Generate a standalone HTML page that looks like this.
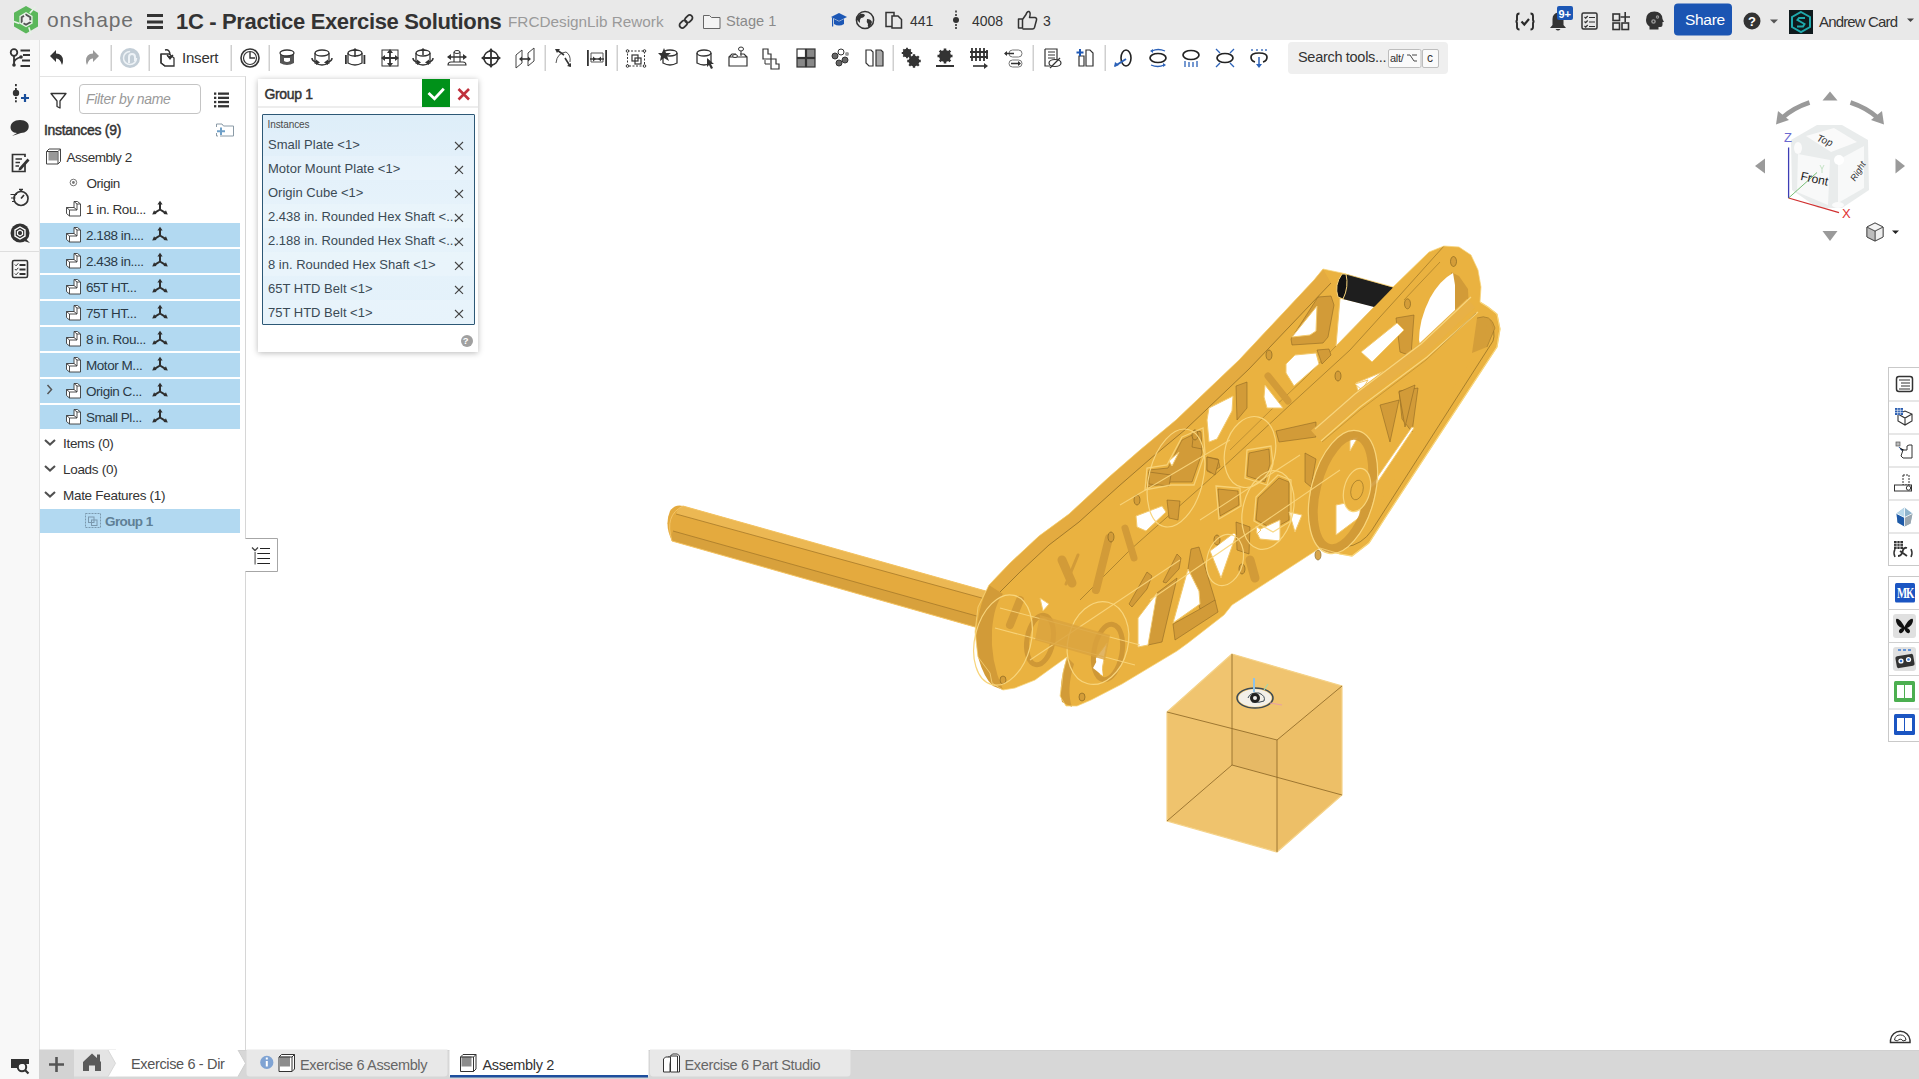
<!DOCTYPE html>
<html><head><meta charset="utf-8">
<style>
*{box-sizing:border-box;margin:0;padding:0}
html,body{width:1919px;height:1079px;overflow:hidden;background:#fff;font-family:"Liberation Sans",sans-serif;color:#333}
.t{position:absolute;white-space:nowrap;line-height:1}
svg{position:absolute;overflow:visible}
</style></head><body>

<div style="position:absolute;left:0;top:0;width:1919px;height:40px;background:#e9e9e9"></div>
<div style="position:absolute;left:0;top:40px;width:39px;height:1039px;background:#f8f8f8"></div>
<div style="position:absolute;left:39px;top:40px;width:1px;height:1039px;background:#e3e3e3"></div>
<div style="position:absolute;left:40px;top:76px;width:206px;height:974px;background:#fff;border-top:1px solid #e3e3e3;border-right:1px solid #d6d6d6"></div>
<div style="position:absolute;left:40px;top:1050px;width:1879px;height:29px;background:#d7d7d7;border-top:1.5px solid #d0d0d0"></div>
<svg style="left:0;top:0" width="1919" height="40">
 <g transform="translate(26,19.7)">
  <polygon points="0,-13.8 12,-6.9 12,6.9 0,13.8 -12,6.9 -12,-6.9" fill="#5bb75b"/>
  <polygon points="0,-7.6 6.6,-3.8 6.6,3.8 0,7.6 -6.6,3.8 -6.6,-3.8" fill="#e6f3e6"/>
  <path d="M3.8,-6.6 L 9.5,-13 M-6.6,3.8 L-13,1.5 M2.8,7.6 L 5,14" stroke="#e6f3e6" stroke-width="1.6"/>
  <polygon points="0,-5 4.3,-2.5 4.3,2.5 0,5 -4.3,2.5 -4.3,-2.5" fill="#eeeeee" stroke="#555" stroke-width="1.9" stroke-dasharray="8 1.8"/>
 </g>
 <rect x="147" y="14" width="16" height="3" fill="#333"/>
 <rect x="147" y="20.5" width="16" height="3" fill="#333"/>
 <rect x="147" y="26" width="16" height="3" fill="#333"/>
 <g stroke="#333" stroke-width="1.8" fill="none" transform="translate(686,21.5) rotate(-45)">
  <rect x="-8" y="-2.8" width="8.5" height="5.6" rx="2.8"/>
  <rect x="-0.5" y="-2.8" width="8.5" height="5.6" rx="2.8"/>
 </g>
 <path d="M703.5,15.5 h6 l2,2 h8.5 v11 h-16.5 z" fill="#f4f4f4" stroke="#666" stroke-width="1"/>
 <g fill="#1c57b5">
  <polygon points="831,17 839,13 847,17 839,21"/>
  <path d="M834,19 v5 q5,3 10,0 v-5 l-5,2.5 z"/>
  <rect x="832" y="17.5" width="1.2" height="9"/>
 </g>
 <g transform="translate(865,20)">
  <circle r="8.6" fill="none" stroke="#333" stroke-width="1.5"/>
  <path d="M-5,-6 q3,-1 5,1 q-1,3 -4,3 q-2,2 -1,5 l-3,-3 q-1,-3 3,-6z M2,-1 q4,0 5,3 q-1,4 -3,6 q-2,-2 -1,-4 q-2,-2 -1,-5z" fill="#333"/>
 </g>
 <g fill="none" stroke="#333" stroke-width="1.5">
  <rect x="886" y="12.5" width="8" height="14"/>
  <path d="M892,16 h6 l3.5,3.5 v8.5 h-9.5 z" fill="#e9e9e9"/>
 </g>
 <g fill="#333"><circle cx="956" cy="20" r="3"/><rect x="955.2" y="10.5" width="1.6" height="2"/><rect x="955.2" y="14" width="1.6" height="2"/><rect x="955.2" y="24" width="1.6" height="2"/><rect x="955.2" y="27" width="1.6" height="2"/></g>
 <path d="M1018.5,19 h4 v9 h-4 z M1022.5,19.5 l3.5,-5 q1,-3.5 3,-3 q2,1 0.5,6 h5.5 q2,0.5 1.5,2.5 l-2,7.5 q-0.5,1.5 -2,1.5 h-10" fill="none" stroke="#333" stroke-width="1.5" stroke-linejoin="round"/>
 <path d="M1519.5,13.5 Q1517,13.5 1517,16 V19.5 Q1517,21.5 1515.5,21.5 Q1517,21.5 1517,23.5 V27 Q1517,29.5 1519.5,29.5 M1530.5,13.5 Q1533,13.5 1533,16 V19.5 Q1533,21.5 1534.5,21.5 Q1533,21.5 1533,23.5 V27 Q1533,29.5 1530.5,29.5" fill="none" stroke="#2a2a2a" stroke-width="1.9"/>
 <path d="M1521.5,21.5 l2.8,3 l4.7,-5.5" fill="none" stroke="#2a2a2a" stroke-width="2.2"/>
 <path d="M1550,28 h16 l-2.5,-3 v-6 q0,-5.5 -5.5,-6.5 q-5.5,1 -5.5,6.5 v6 z M1555.5,29 q2.5,3 5,0 z" fill="#333"/>
 <rect x="1557" y="6" width="16" height="14" rx="2" fill="#1c57b5"/>
 <text x="1558.5" y="17.5" font-family="Liberation Sans" font-size="11" font-weight="bold" fill="#fff">9+</text>
 <rect x="1582" y="13" width="15" height="16" rx="1.5" fill="none" stroke="#333" stroke-width="1.5"/>
 <path d="M1584.5,17 l1.2,1.2 l2,-2.2 M1584.5,21.5 l1.2,1.2 l2,-2.2 M1584.5,26 l1.2,1.2 l2,-2.2 M1589,17.5 h6 M1589,22 h6 M1589,26.5 h6" fill="none" stroke="#333" stroke-width="1.2"/>
 <g fill="none" stroke="#333" stroke-width="1.6">
  <rect x="1613" y="14" width="6.5" height="6.5"/><rect x="1613" y="23" width="6.5" height="6.5"/><rect x="1622" y="23" width="6.5" height="6.5"/>
  <path d="M1625.2,12 v10 M1620.5,17 h9.5"/>
 </g>
 <path d="M1646,20 q0,-8.5 8.5,-8.5 q7.5,0 8,7.5 l1.5,3 h-1.5 v3 q0,2 -2,2 h-2 v2.5 h-9 v-3 q-3.5,-2.5 -3.5,-6.5z" fill="#333"/>
 <g fill="#9a9a9a"><circle cx="1653.5" cy="21.5" r="2.3"/><circle cx="1657.5" cy="17" r="1.7"/></g><circle cx="1653.5" cy="21.5" r="0.9" fill="#333"/><circle cx="1657.5" cy="17" r="0.6" fill="#333"/>
 <rect x="1674" y="3.5" width="58" height="32" rx="4" fill="#1b55b3"/>
 <circle cx="1752" cy="21" r="8.5" fill="#333"/>
 <text x="1748" y="26" font-family="Liberation Sans" font-size="13" font-weight="bold" fill="#fff">?</text>
 <polygon points="1770,19.5 1778,19.5 1774,23.5" fill="#555"/>
 <rect x="1789" y="10" width="24" height="24" fill="#0f1a1d"/>
 <polygon points="1801,12 1810,17 1810,27 1801,32 1792,27 1792,17" fill="none" stroke="#1fa9ad" stroke-width="2"/>
 <path d="M1805,18 h-6 l-1.5,2 l7,4 l-1.5,2.5 h-6" fill="none" stroke="#1fa9ad" stroke-width="2"/>
 <polygon points="1907,18.5 1914,18.5 1910.5,22" fill="#444"/>
</svg>
<div class="t" style="left:176px;top:11px;font-size:22px;color:#333;font-weight:bold;letter-spacing:-0.34px">1C - Practice Exercise Solutions</div>
<div class="t" style="left:47px;top:9px;font-size:21px;color:#6e6e6e;letter-spacing:0.9px">onshape</div>
<div class="t" style="left:508px;top:14px;font-size:15.3px;color:#9a9a9a;">FRCDesignLib Rework</div>
<div class="t" style="left:726px;top:14px;font-size:14.6px;color:#8a8a8a;">Stage 1</div>
<div class="t" style="left:910px;top:14px;font-size:14px;color:#333;">441</div>
<div class="t" style="left:972px;top:14px;font-size:14px;color:#333;">4008</div>
<div class="t" style="left:1043px;top:14px;font-size:14px;color:#333;">3</div>
<div class="t" style="left:1685px;top:12px;font-size:15.5px;color:#fff;letter-spacing:-0.3px">Share</div>
<div class="t" style="left:1819px;top:14px;font-size:15px;color:#333;letter-spacing:-0.85px">Andrew Card</div>
<svg style="left:0;top:0" width="1919" height="80"><rect x="110.5" y="45" width="1.5" height="26" fill="#cfcfcf"/><rect x="148.5" y="45" width="1.5" height="26" fill="#cfcfcf"/><rect x="230.5" y="45" width="1.5" height="26" fill="#cfcfcf"/><rect x="268.5" y="45" width="1.5" height="26" fill="#cfcfcf"/><rect x="544.5" y="45" width="1.5" height="26" fill="#cfcfcf"/><rect x="616.5" y="45" width="1.5" height="26" fill="#cfcfcf"/><rect x="892.5" y="45" width="1.5" height="26" fill="#cfcfcf"/><rect x="1032.5" y="45" width="1.5" height="26" fill="#cfcfcf"/><rect x="1104.5" y="45" width="1.5" height="26" fill="#cfcfcf"/><g transform="translate(57,58)"><path d="M-7,-2 L-1,-8 V-4.5 Q6,-4.5 6,3 Q6,5 5,7 Q3,0 -1,0.5 V4 Z" fill="#333"/></g><g transform="translate(92,58)"><g transform="scale(-1,1)"><path d="M-7,-2 L-1,-8 V-4.5 Q6,-4.5 6,3 Q6,5 5,7 Q3,0 -1,0.5 V4 Z" fill="#999"/></g></g><g transform="translate(130,58)"><circle r="10" fill="#c2cdd6"/><path d="M-1,5 V-1 Q-1,-4 2,-4 Q5,-4 5,-1 V3" fill="none" stroke="#eef3f7" stroke-width="2"/><circle r="6.5" fill="none" stroke="#eef3f7" stroke-width="1.5" stroke-dasharray="30 10"/></g><g transform="translate(168,58)"><path d="M-7,-4 h8 l5,4 v8 h-9 l-4,-3 z" fill="#fff" stroke="#333" stroke-width="1.3"/><path d="M-7,-4 v9 l4,3" fill="none" stroke="#333" stroke-width="1.3"/><path d="M-3,-8 q5,-1 5,5 M-1,-3 l3,3 l3,-3" fill="none" stroke="#333" stroke-width="1.5"/><polygon points="-1,-2 5,-2 2,2" fill="#333"/></g><g transform="translate(250,58)"><circle r="9" fill="none" stroke="#333" stroke-width="1.6"/><circle r="6.5" fill="none" stroke="#333" stroke-width="1.2"/><path d="M0,-6 V0 H5" fill="none" stroke="#333" stroke-width="1.4"/></g><g transform="translate(287,58)"><path d="M-7,-5 V5 Q0,9 7,5 V-5 Q0,-1 -7,-5z" fill="#555"/><ellipse cx="0" cy="-5" rx="7" ry="3" fill="#fff" stroke="#333" stroke-width="1.3"/><path d="M-3,0 v3 q3,2 6,0 v-3" fill="#fff"/></g><g transform="translate(322,58)"><ellipse cx="0" cy="-5" rx="7" ry="3" fill="#fff" stroke="#333" stroke-width="1.3"/><path d="M-7,-5 V5 Q0,9 7,5 V-5" fill="none" stroke="#333" stroke-width="1.3"/><path d="M-10,0 q0,3 4,4 M10,0 q0,3 -4,4" fill="none" stroke="#333" stroke-width="1.5"/><polygon points="-6,1.5 -2,4.5 -6,7" fill="#333"/><polygon points="6,1.5 2,4.5 6,7" fill="#333"/></g><g transform="translate(355,58)"><ellipse cx="0" cy="-5" rx="7" ry="3" fill="#fff" stroke="#333" stroke-width="1.3"/><path d="M-7,-5 V5 Q0,9 7,5 V-5" fill="none" stroke="#333" stroke-width="1.3"/><rect x="-10" y="-3" width="1.8" height="9" fill="#333"/><rect x="8.5" y="-3" width="1.8" height="9" fill="#333"/><path d="M0,-1 V-9" stroke="#333" stroke-width="1.5"/><polygon points="-3,-7 3,-7 0,-10" fill="#333"/></g><g transform="translate(390,58)"><rect x="-8" y="-8" width="16" height="16" fill="none" stroke="#333" stroke-width="1"/><path d="M-7,0 H7 M0,-7 V7" stroke="#333" stroke-width="1.8"/><polygon points="-9,0 -5,-3 -5,3" fill="#333"/><polygon points="9,0 5,-3 5,3" fill="#333"/><polygon points="0,-9 -3,-5 3,-5" fill="#333"/><polygon points="0,9 -3,5 3,5" fill="#333"/></g><g transform="translate(423,58)"><ellipse cx="0" cy="-5" rx="7" ry="3" fill="#fff" stroke="#333" stroke-width="1.3"/><path d="M-7,-5 V5 Q0,9 7,5 V-5" fill="none" stroke="#333" stroke-width="1.3"/><path d="M-10,0 q0,3 4,4 M10,0 q0,3 -4,4" fill="none" stroke="#333" stroke-width="1.5"/><polygon points="-6,1.5 -2,4.5 -6,7" fill="#333"/><polygon points="6,1.5 2,4.5 6,7" fill="#333"/><path d="M0,-3 V-9" stroke="#333" stroke-width="1.5"/><polygon points="-3,-7 3,-7 0,-10" fill="#333"/></g><g transform="translate(457,58)"><ellipse cx="0" cy="-6" rx="3" ry="1.5" fill="none" stroke="#333" stroke-width="1"/><path d="M-3,-6 V4 M3,-6 V4 M-6,4 H6 Q9,4 9,7 H-9 Q-9,4 -6,4" fill="none" stroke="#333" stroke-width="1.1"/><path d="M-9,-1 H9" stroke="#333" stroke-width="1.5"/><polygon points="-10,-1 -6,-4 -6,2" fill="#333"/><polygon points="10,-1 6,-4 6,2" fill="#333"/></g><g transform="translate(491,58)"><circle r="7" fill="none" stroke="#333" stroke-width="1.5"/><path d="M-9,0 H9 M0,-9 V9" stroke="#333" stroke-width="1.8"/><polygon points="-10,0 -6,-3 -6,3" fill="#333"/><polygon points="10,0 6,-3 6,3" fill="#333"/><polygon points="0,-10 -3,-6 3,-6" fill="#333"/><polygon points="0,10 -3,6 3,6" fill="#333"/></g><g transform="translate(525,58)"><path d="M-9,-3 L-3,-8 V5 L-9,10 Z M3,-5 L9,-10 V3 L3,8 Z" fill="none" stroke="#444" stroke-width="1"/><path d="M-5,1 H5" stroke="#333" stroke-width="1.6"/><polygon points="-6,1 -3,-1.5 -3,3.5" fill="#333"/><polygon points="6,1 3,-1.5 3,3.5" fill="#333"/></g><g transform="translate(563,58)"><path d="M-7,5 Q-6,-5 3,-6 Q8,-3 7,4" fill="none" stroke="#555" stroke-width="1"/><path d="M-6,-8 L1,-3 M2,0 L7,8" stroke="#333" stroke-width="1.6"/><polygon points="-8,-9 -3,-9 -6,-5" fill="#333"/><polygon points="8,9 4,8 8,5" fill="#333"/></g><g transform="translate(597,58)"><rect x="-10" y="-8" width="1.8" height="16" fill="#333"/><rect x="8.2" y="-8" width="1.8" height="16" fill="#333"/><path d="M-6,-5 h12 v9 h-12 z" fill="#fff" stroke="#555" stroke-width="1"/><path d="M-7,1 H7" stroke="#333" stroke-width="1.4"/><polygon points="-1,1 -4,-1.5 -4,3.5" fill="#333"/><polygon points="1,1 4,-1.5 4,3.5" fill="#333"/></g><g transform="translate(636,58)"><rect x="-8.5" y="-7" width="17" height="15" fill="none" stroke="#333" stroke-width="1" stroke-dasharray="2 1.5"/><circle cx="-8.5" cy="-7" r="1.3" fill="#fff" stroke="#333"/><circle cx="8.5" cy="-7" r="1.3" fill="#fff" stroke="#333"/><circle cx="-8.5" cy="8" r="1.3" fill="#fff" stroke="#333"/><circle cx="8.5" cy="8" r="1.3" fill="#fff" stroke="#333"/><rect x="-4" y="-3" width="6" height="6" fill="none" stroke="#333" stroke-width="1.2"/><rect x="-1" y="0" width="6" height="6" fill="none" stroke="#333" stroke-width="1.2"/></g><g transform="translate(670,58)"><ellipse cx="0" cy="-5" rx="7" ry="3" fill="#fff" stroke="#333" stroke-width="1.3"/><path d="M-7,-5 V5 Q0,9 7,5 V-5" fill="none" stroke="#333" stroke-width="1.3"/><polygon points="-6,-10 -4,-5 1,-5 -3,-2 -1,3 -6,0 -10,3 -9,-2 -12,-5 -8,-5" fill="#333"/></g><g transform="translate(704,58)"><ellipse cx="0" cy="-5" rx="7" ry="3" fill="#fff" stroke="#333" stroke-width="1.3"/><path d="M-7,-5 V5 Q0,9 7,5 V-5" fill="none" stroke="#333" stroke-width="1.3"/><polygon points="3,0 10,6 7,6 9,10 7,11 5,7 3,9" fill="#333"/></g><g transform="translate(738,58)"><path d="M-9,-1 H9 V8 H-9 Z M-9,-1 L-6,-4 H-2 M2,-4 H6 L9,-1" fill="#fff" stroke="#333" stroke-width="1.2"/><ellipse cx="-3" cy="-2" rx="2.5" ry="1.5" fill="#fff" stroke="#333" stroke-width="1"/><ellipse cx="3" cy="-9" rx="2.5" ry="2" fill="#fff" stroke="#333" stroke-width="1"/><path d="M3,-7 V-2" stroke="#333" stroke-width="1"/></g><g transform="translate(771,58)"><path d="M-8,-9 h5 v5 h3 v5 h-8 z M0,1 h5 v5 h3 v5 h-8 z" fill="#fff" stroke="#333" stroke-width="1.2"/><path d="M-6,2 v4 h5" fill="none" stroke="#333" stroke-width="1"/></g><g transform="translate(806,58)"><rect x="-9" y="-9" width="8.5" height="8.5" fill="#fff" stroke="#333" stroke-width="1.2"/><rect x="0.5" y="-9" width="8.5" height="8.5" fill="#888" stroke="#333" stroke-width="1.2"/><rect x="-9" y="0.5" width="8.5" height="8.5" fill="#888" stroke="#333" stroke-width="1.2"/><rect x="0.5" y="0.5" width="8.5" height="8.5" fill="#888" stroke="#333" stroke-width="1.2"/></g><g transform="translate(840,58)"><circle cx="-5" cy="-2" r="3" fill="#666" stroke="#333"/><circle cx="1" cy="-6" r="3" fill="#fff" stroke="#333"/><circle cx="5" cy="2" r="3" fill="#666" stroke="#333"/><circle cx="-1" cy="5" r="3" fill="#666" stroke="#333"/><circle cx="7" cy="-4" r="2" fill="#999"/></g><g transform="translate(874,58)"><path d="M-8,-8 h5 l2,2 v14 h-4 l-3,-3 z" fill="#fff" stroke="#333" stroke-width="1.2"/><path d="M2,-8 h5 l2,2 v14 h-7 z" fill="#aaa" stroke="#333" stroke-width="1.2"/></g><g transform="translate(911,58)"><g transform="translate(-4,-5) scale(0.7)"><circle r="4.5" fill="none" stroke="#333" stroke-width="3"/><path d="M0,-7.5 V7.5 M-7.5,0 H7.5 M-5.3,-5.3 L5.3,5.3 M-5.3,5.3 L5.3,-5.3" stroke="#333" stroke-width="2.6"/></g><g transform="translate(3,3) scale(0.9)"><circle r="4.5" fill="none" stroke="#333" stroke-width="3"/><path d="M0,-7.5 V7.5 M-7.5,0 H7.5 M-5.3,-5.3 L5.3,5.3 M-5.3,5.3 L5.3,-5.3" stroke="#333" stroke-width="2.6"/></g></g><g transform="translate(945,58)"><g transform="translate(0,-2) scale(1.0)"><circle r="4.5" fill="none" stroke="#333" stroke-width="3"/><path d="M0,-7.5 V7.5 M-7.5,0 H7.5 M-5.3,-5.3 L5.3,5.3 M-5.3,5.3 L5.3,-5.3" stroke="#333" stroke-width="2.6"/></g><rect x="-9" y="7" width="18" height="2" fill="#333"/></g><g transform="translate(979,58)"><path d="M-9,-6 H9 M-9,-1 H9" stroke="#333" stroke-width="2"/><path d="M-7,-10 V3 M-3,-10 V3 M1,-10 V3 M5,-10 V3 M8,-8 V1" stroke="#333" stroke-width="1.8"/><path d="M-6,8 H6" stroke="#333" stroke-width="1.6"/><polygon points="9,8 5,5 5,11" fill="#333"/></g><g transform="translate(1013,58)"><rect x="-4" y="-8" width="13" height="7" rx="3.5" fill="#fff" stroke="#777" stroke-width="1"/><rect x="-4" y="2" width="13" height="7" rx="3.5" fill="#fff" stroke="#777" stroke-width="1"/><path d="M-8,-4.5 H1 M-2,5.5 H7" stroke="#333" stroke-width="1.5"/><polygon points="-9,-4.5 -6,-7 -6,-2" fill="#333"/><polygon points="8,5.5 5,3 5,8" fill="#333"/></g><g transform="translate(1052,58)"><path d="M-7,-9 H5 V2 M-7,-9 V8 H-2" fill="none" stroke="#333" stroke-width="1.2"/><path d="M-4,-6 H3 M-4,-3 H3 M-4,0 H3" stroke="#333" stroke-width="1"/><ellipse cx="3" cy="5" rx="6" ry="3.5" fill="#fff" stroke="#333" stroke-width="1.2"/><path d="M-2,10 L8,0" stroke="#333" stroke-width="1.2"/></g><g transform="translate(1085,58)"><path d="M-6,-2 h5 v10 h-5 z M1,-8 h4 l3,3 v13 h-7 z" fill="#fff" stroke="#333" stroke-width="1.2"/><path d="M-5,-9 V-2 M-8.5,-5.5 H-1.5" stroke="#1c57b5" stroke-width="2"/></g><g transform="translate(1124,58)"><ellipse cx="2" cy="0" rx="5" ry="8" fill="none" stroke="#222" stroke-width="1.6"/><path d="M-9,8 L2,1" stroke="#2c62b8" stroke-width="2"/><polygon points="-10,9 -9,4 -5,7" fill="#2c62b8"/></g><g transform="translate(1158,58)"><ellipse cx="0" cy="0" rx="8" ry="4.5" fill="none" stroke="#222" stroke-width="1.7"/><path d="M-6,-7 Q0,-10 7,-7 M-7,7 Q0,10 6,7" fill="none" stroke="#2c62b8" stroke-width="1.3"/><polygon points="-8,-7 -5,-9 -5,-5" fill="#2c62b8"/><polygon points="8,7 5,5 5,9" fill="#2c62b8"/></g><g transform="translate(1191,58)"><ellipse cx="0" cy="-3" rx="8" ry="4.5" fill="none" stroke="#222" stroke-width="1.7"/><path d="M-6,3 V9 M-2,4 V9 M2,4 V9 M6,3 V9" stroke="#2c62b8" stroke-width="1.3"/></g><g transform="translate(1225,58)"><ellipse cx="0" cy="0" rx="8" ry="4.5" fill="none" stroke="#222" stroke-width="1.7"/><path d="M-9,-9 L-5,-5 M9,-9 L5,-5 M-9,9 L-5,5 M9,9 L5,5" stroke="#2c62b8" stroke-width="1.3"/></g><g transform="translate(1259,58)"><path d="M-4,4 Q-8,3 -8,-1 Q-8,-5 0,-5 Q8,-5 8,-1 Q8,3 4,4" fill="none" stroke="#222" stroke-width="1.7"/><path d="M-7,-9 V-7 M-2,-9 V-7 M3,-9 V-7 M7,-9 V-7" stroke="#2c62b8" stroke-width="1.3"/><path d="M0,-1 V8" stroke="#2c62b8" stroke-width="1.5"/><polygon points="-3,6 3,6 0,10" fill="#2c62b8"/></g><rect x="1288" y="42" width="160" height="32" rx="4" fill="#efefef"/><rect x="1388.5" y="49.5" width="32.5" height="18" rx="1.5" fill="#fafafa" stroke="#bdbdbd" stroke-width="1"/><rect x="1422.5" y="49.5" width="16" height="18" rx="1.5" fill="#fafafa" stroke="#bdbdbd" stroke-width="1"/><path d="M1407,55 h3 l4,6 h3 M1412,55 h5" fill="none" stroke="#333" stroke-width="0.9"/></svg>
<div class="t" style="left:182px;top:50px;font-size:15px;color:#333;letter-spacing:-0.2px">Insert</div>
<div class="t" style="left:1298px;top:50px;font-size:14.5px;color:#333;letter-spacing:-0.3px">Search tools...</div>
<div class="t" style="left:1390px;top:53px;font-size:11px;color:#333;letter-spacing:-0.3px">alt/</div>
<div class="t" style="left:1427px;top:52px;font-size:12px;color:#333;">c</div>
<svg style="left:0;top:0" width="250" height="1079">
<g fill="none" stroke="#333" stroke-width="1.8">
 <circle cx="14" cy="52.5" r="3.3"/>
 <path d="M14,56 V65 M14,63 Q14,59 21,57"/>
 <path d="M20.5,50.5 H30 M23,55 H30 M22,60.5 H30 M20.5,66 H30"/>
</g>
<circle cx="14" cy="65" r="1.8" fill="#333"/><circle cx="21" cy="57" r="1.8" fill="#333"/>
<g fill="#333">
 <rect x="15" y="84" width="1.8" height="2.2"/><rect x="15" y="88" width="1.8" height="2"/><circle cx="16" cy="93" r="3.2"/><rect x="15" y="97" width="1.8" height="2"/><rect x="15" y="100.3" width="1.8" height="2"/>
</g>
<path d="M21,98 H29 M25,94 V102" stroke="#1a4f9c" stroke-width="2.2"/>
<path d="M20,120 C8,120 8,133 17,133 L12,136 L21,133 C31,133 32,120 20,120 Z" fill="#333"/>
<g fill="none" stroke="#333" stroke-width="1.7">
 <path d="M25,164 V171.5 H12.5 V154.5 H25 V157"/>
 <path d="M15.5,159 H22 M15.5,162.5 H20 M15.5,166 H19"/>
</g>
<path d="M19,168 L27.5,158.5 L29.5,160.5 L21,170 L18.5,170.5 Z" fill="#333"/>
<g fill="none" stroke="#333" stroke-width="1.7">
 <circle cx="21" cy="198.5" r="7"/>
 <path d="M21,198.5 L24,195 M19,189.5 H23 M21,189.5 V191.5"/>
 <path d="M10.5,194.5 H17 M11,198 H15.5 M12,201.5 H15" stroke-width="1.2"/>
</g>
<circle cx="20" cy="233" r="9.5" fill="#333"/>
<path d="M26,239 L30,243 L24,241 Z" fill="#333"/>
<polygon points="20,227 25,230 25,236 20,239 15,236 15,230" fill="none" stroke="#fff" stroke-width="1.4"/>
<polygon points="20,230 22.5,231.5 22.5,234.5 20,236 17.5,234.5 17.5,231.5" fill="none" stroke="#fff" stroke-width="1.2"/>
<rect x="0" y="251" width="39" height="1" fill="#dedede"/>
<rect x="12.5" y="260.5" width="15" height="17" rx="1.5" fill="none" stroke="#333" stroke-width="1.6"/>
<path d="M14.8,264.5 l1.3,1.3 l2.2,-2.5 M14.8,269 l1.3,1.3 l2.2,-2.5 M14.8,273.5 l1.3,1.3 l2.2,-2.5" fill="none" stroke="#333" stroke-width="1"/>
<path d="M19.5,265 h6 M19.5,269.5 h6 M19.5,274 h6" stroke="#333" stroke-width="1.8"/>
<!-- panel header -->
<path d="M51,93.5 H66 L60,101 V108 L57,106.5 V101 Z" fill="none" stroke="#333" stroke-width="1.3" stroke-linejoin="round"/>
<rect x="79.5" y="84.5" width="121" height="29" rx="3.5" fill="#fff" stroke="#c4c4c4" stroke-width="1"/>
<g fill="#333"><rect x="214" y="92.5" width="2.3" height="2.3"/><rect x="218" y="92.5" width="11" height="2.3"/>
<rect x="214" y="96.7" width="2.3" height="2.3"/><rect x="218" y="96.7" width="11" height="2.3"/>
<rect x="214" y="100.9" width="2.3" height="2.3"/><rect x="218" y="100.9" width="11" height="2.3"/>
<rect x="214" y="105.1" width="2.3" height="2.3"/><rect x="218" y="105.1" width="11" height="2.3"/></g>
<path d="M216.5,127 V124 H222 L223.5,126 H233.5 V136 H220 M216.5,133 V136 H218" fill="none" stroke="#8a9aa6" stroke-width="1"/>
<path d="M221,127.5 V135 M217,131.3 H225" stroke="#6fa0c8" stroke-width="2"/>
</svg>
<div class="t" style="left:86px;top:92px;font-size:14px;color:#999;font-style:italic;letter-spacing:-0.3px">Filter by name</div>
<div class="t" style="left:44px;top:122.5px;font-size:14px;color:#333;-webkit-text-stroke:0.45px #333;letter-spacing:-0.3px">Instances (9)</div>
<div class="t" style="left:66.5px;top:150.5px;font-size:13.5px;color:#333;letter-spacing:-0.45px">Assembly 2</div>
<div class="t" style="left:86.5px;top:176.5px;font-size:13.5px;color:#333;letter-spacing:-0.45px">Origin</div>
<div class="t" style="left:86px;top:202.5px;font-size:13.5px;color:#333;letter-spacing:-0.45px">1 in. Rou...</div>
<div style="position:absolute;left:40px;top:223px;width:200px;height:24px;background:#b2d9f1"></div>
<div class="t" style="left:86px;top:228.5px;font-size:13.5px;color:#2b3a46;letter-spacing:-0.45px">2.188 in....</div>
<div style="position:absolute;left:40px;top:249px;width:200px;height:24px;background:#b2d9f1"></div>
<div class="t" style="left:86px;top:254.5px;font-size:13.5px;color:#2b3a46;letter-spacing:-0.45px">2.438 in....</div>
<div style="position:absolute;left:40px;top:275px;width:200px;height:24px;background:#b2d9f1"></div>
<div class="t" style="left:86px;top:280.5px;font-size:13.5px;color:#2b3a46;letter-spacing:-0.45px">65T HT...</div>
<div style="position:absolute;left:40px;top:301px;width:200px;height:24px;background:#b2d9f1"></div>
<div class="t" style="left:86px;top:306.5px;font-size:13.5px;color:#2b3a46;letter-spacing:-0.45px">75T HT...</div>
<div style="position:absolute;left:40px;top:327px;width:200px;height:24px;background:#b2d9f1"></div>
<div class="t" style="left:86px;top:332.5px;font-size:13.5px;color:#2b3a46;letter-spacing:-0.45px">8 in. Rou...</div>
<div style="position:absolute;left:40px;top:353px;width:200px;height:24px;background:#b2d9f1"></div>
<div class="t" style="left:86px;top:358.5px;font-size:13.5px;color:#2b3a46;letter-spacing:-0.45px">Motor M...</div>
<div style="position:absolute;left:40px;top:379px;width:200px;height:24px;background:#b2d9f1"></div>
<div class="t" style="left:86px;top:384.5px;font-size:13.5px;color:#2b3a46;letter-spacing:-0.45px">Origin C...</div>
<div style="position:absolute;left:40px;top:405px;width:200px;height:24px;background:#b2d9f1"></div>
<div class="t" style="left:86px;top:410.5px;font-size:13.5px;color:#2b3a46;letter-spacing:-0.45px">Small Pl...</div>
<div class="t" style="left:63px;top:436.5px;font-size:13.5px;color:#333;letter-spacing:-0.3px">Items (0)</div>
<div class="t" style="left:63px;top:462.5px;font-size:13.5px;color:#333;letter-spacing:-0.3px">Loads (0)</div>
<div class="t" style="left:63px;top:488.5px;font-size:13.5px;color:#333;letter-spacing:-0.3px">Mate Features (1)</div>
<div style="position:absolute;left:40px;top:509px;width:200px;height:24px;background:#b2d9f1"></div>
<div class="t" style="left:105px;top:514.5px;font-size:13.5px;color:#5f7f95;font-weight:bold;letter-spacing:-0.6px">Group 1</div>
<svg style="left:0;top:0" width="300" height="1079"><g transform="translate(46,148.5)"><path d="M0.5,3 L3,0.5 H14.5 V13 L12,15.5 H0.5 Z" fill="#fff" stroke="#444" stroke-width="1"/><rect x="2.5" y="3" width="9" height="9" fill="#999"/><path d="M0.5,3 H12 V15.5 M12,3 L14.5,0.5" fill="none" stroke="#444" stroke-width="1"/></g><circle cx="73.4" cy="182.5" r="3.3" fill="none" stroke="#777" stroke-width="1"/><circle cx="73.4" cy="182.5" r="1.4" fill="#777"/><g transform="translate(66,201)" fill="#fff" stroke="#3a3a3a" stroke-width="0.9" stroke-linejoin="round"><path d="M0.5,6.5 H8 V0.5 H11.5 L14.5,3 V15 H3.5 L0.5,12.5 Z"/><path d="M3.5,15 V9 H11 V3 H14.5 M0.5,6.5 L3.5,9 M8,6.5 L11,9 M8,0.5 L11,3" fill="none"/></g><g transform="translate(160,209.5)" fill="#2e2e2e"><path d="M0,0 V-6 M0,0 L-5,3.2 M0,0 L5,3.2" stroke="#2e2e2e" stroke-width="2" fill="none"/><polygon points="0,-8.8 -2.6,-5 2.6,-5"/><polygon points="-7.8,5 -5.9,0.8 -3.5,4.6"/><polygon points="7.8,5 5.9,0.8 3.5,4.6"/></g><g transform="translate(66,227)" fill="#fff" stroke="#3a3a3a" stroke-width="0.9" stroke-linejoin="round"><path d="M0.5,6.5 H8 V0.5 H11.5 L14.5,3 V15 H3.5 L0.5,12.5 Z"/><path d="M3.5,15 V9 H11 V3 H14.5 M0.5,6.5 L3.5,9 M8,6.5 L11,9 M8,0.5 L11,3" fill="none"/></g><g transform="translate(160,235.5)" fill="#2e2e2e"><path d="M0,0 V-6 M0,0 L-5,3.2 M0,0 L5,3.2" stroke="#2e2e2e" stroke-width="2" fill="none"/><polygon points="0,-8.8 -2.6,-5 2.6,-5"/><polygon points="-7.8,5 -5.9,0.8 -3.5,4.6"/><polygon points="7.8,5 5.9,0.8 3.5,4.6"/></g><g transform="translate(66,253)" fill="#fff" stroke="#3a3a3a" stroke-width="0.9" stroke-linejoin="round"><path d="M0.5,6.5 H8 V0.5 H11.5 L14.5,3 V15 H3.5 L0.5,12.5 Z"/><path d="M3.5,15 V9 H11 V3 H14.5 M0.5,6.5 L3.5,9 M8,6.5 L11,9 M8,0.5 L11,3" fill="none"/></g><g transform="translate(160,261.5)" fill="#2e2e2e"><path d="M0,0 V-6 M0,0 L-5,3.2 M0,0 L5,3.2" stroke="#2e2e2e" stroke-width="2" fill="none"/><polygon points="0,-8.8 -2.6,-5 2.6,-5"/><polygon points="-7.8,5 -5.9,0.8 -3.5,4.6"/><polygon points="7.8,5 5.9,0.8 3.5,4.6"/></g><g transform="translate(66,279)" fill="#fff" stroke="#3a3a3a" stroke-width="0.9" stroke-linejoin="round"><path d="M0.5,6.5 H8 V0.5 H11.5 L14.5,3 V15 H3.5 L0.5,12.5 Z"/><path d="M3.5,15 V9 H11 V3 H14.5 M0.5,6.5 L3.5,9 M8,6.5 L11,9 M8,0.5 L11,3" fill="none"/></g><g transform="translate(160,287.5)" fill="#2e2e2e"><path d="M0,0 V-6 M0,0 L-5,3.2 M0,0 L5,3.2" stroke="#2e2e2e" stroke-width="2" fill="none"/><polygon points="0,-8.8 -2.6,-5 2.6,-5"/><polygon points="-7.8,5 -5.9,0.8 -3.5,4.6"/><polygon points="7.8,5 5.9,0.8 3.5,4.6"/></g><g transform="translate(66,305)" fill="#fff" stroke="#3a3a3a" stroke-width="0.9" stroke-linejoin="round"><path d="M0.5,6.5 H8 V0.5 H11.5 L14.5,3 V15 H3.5 L0.5,12.5 Z"/><path d="M3.5,15 V9 H11 V3 H14.5 M0.5,6.5 L3.5,9 M8,6.5 L11,9 M8,0.5 L11,3" fill="none"/></g><g transform="translate(160,313.5)" fill="#2e2e2e"><path d="M0,0 V-6 M0,0 L-5,3.2 M0,0 L5,3.2" stroke="#2e2e2e" stroke-width="2" fill="none"/><polygon points="0,-8.8 -2.6,-5 2.6,-5"/><polygon points="-7.8,5 -5.9,0.8 -3.5,4.6"/><polygon points="7.8,5 5.9,0.8 3.5,4.6"/></g><g transform="translate(66,331)" fill="#fff" stroke="#3a3a3a" stroke-width="0.9" stroke-linejoin="round"><path d="M0.5,6.5 H8 V0.5 H11.5 L14.5,3 V15 H3.5 L0.5,12.5 Z"/><path d="M3.5,15 V9 H11 V3 H14.5 M0.5,6.5 L3.5,9 M8,6.5 L11,9 M8,0.5 L11,3" fill="none"/></g><g transform="translate(160,339.5)" fill="#2e2e2e"><path d="M0,0 V-6 M0,0 L-5,3.2 M0,0 L5,3.2" stroke="#2e2e2e" stroke-width="2" fill="none"/><polygon points="0,-8.8 -2.6,-5 2.6,-5"/><polygon points="-7.8,5 -5.9,0.8 -3.5,4.6"/><polygon points="7.8,5 5.9,0.8 3.5,4.6"/></g><g transform="translate(66,357)" fill="#fff" stroke="#3a3a3a" stroke-width="0.9" stroke-linejoin="round"><path d="M0.5,6.5 H8 V0.5 H11.5 L14.5,3 V15 H3.5 L0.5,12.5 Z"/><path d="M3.5,15 V9 H11 V3 H14.5 M0.5,6.5 L3.5,9 M8,6.5 L11,9 M8,0.5 L11,3" fill="none"/></g><g transform="translate(160,365.5)" fill="#2e2e2e"><path d="M0,0 V-6 M0,0 L-5,3.2 M0,0 L5,3.2" stroke="#2e2e2e" stroke-width="2" fill="none"/><polygon points="0,-8.8 -2.6,-5 2.6,-5"/><polygon points="-7.8,5 -5.9,0.8 -3.5,4.6"/><polygon points="7.8,5 5.9,0.8 3.5,4.6"/></g><g transform="translate(66,383)" fill="#fff" stroke="#3a3a3a" stroke-width="0.9" stroke-linejoin="round"><path d="M0.5,6.5 H8 V0.5 H11.5 L14.5,3 V15 H3.5 L0.5,12.5 Z"/><path d="M3.5,15 V9 H11 V3 H14.5 M0.5,6.5 L3.5,9 M8,6.5 L11,9 M8,0.5 L11,3" fill="none"/></g><g transform="translate(160,391.5)" fill="#2e2e2e"><path d="M0,0 V-6 M0,0 L-5,3.2 M0,0 L5,3.2" stroke="#2e2e2e" stroke-width="2" fill="none"/><polygon points="0,-8.8 -2.6,-5 2.6,-5"/><polygon points="-7.8,5 -5.9,0.8 -3.5,4.6"/><polygon points="7.8,5 5.9,0.8 3.5,4.6"/></g><path d="M47.5,385 L51.5,389.5 L47.5,394" fill="none" stroke="#555" stroke-width="1.5"/><g transform="translate(66,409)" fill="#fff" stroke="#3a3a3a" stroke-width="0.9" stroke-linejoin="round"><path d="M0.5,6.5 H8 V0.5 H11.5 L14.5,3 V15 H3.5 L0.5,12.5 Z"/><path d="M3.5,15 V9 H11 V3 H14.5 M0.5,6.5 L3.5,9 M8,6.5 L11,9 M8,0.5 L11,3" fill="none"/></g><g transform="translate(160,417.5)" fill="#2e2e2e"><path d="M0,0 V-6 M0,0 L-5,3.2 M0,0 L5,3.2" stroke="#2e2e2e" stroke-width="2" fill="none"/><polygon points="0,-8.8 -2.6,-5 2.6,-5"/><polygon points="-7.8,5 -5.9,0.8 -3.5,4.6"/><polygon points="7.8,5 5.9,0.8 3.5,4.6"/></g><path d="M45,440 L50,444.5 L55,440" fill="none" stroke="#505050" stroke-width="2.1"/><path d="M45,466 L50,470.5 L55,466" fill="none" stroke="#505050" stroke-width="2.1"/><path d="M45,492 L50,496.5 L55,492" fill="none" stroke="#505050" stroke-width="2.1"/><g transform="translate(85,513)" fill="none" stroke="#7b98ad" stroke-width="1" stroke-dasharray="2 1"><rect x="0.5" y="0.5" width="15" height="14"/></g><rect x="88.5" y="517" width="5.5" height="5.5" fill="none" stroke="#7b98ad"/><rect x="91.5" y="520" width="5.5" height="5.5" fill="none" stroke="#7b98ad"/><rect x="244" y="538.5" width="33.5" height="33" fill="#fff"/><path d="M245.5,538.5 H277.5 V571.5 H245.5" fill="none" stroke="#a6a6a6" stroke-width="1"/><path d="M252,547.5 L255,550.5 L258,547.5" fill="none" stroke="#444" stroke-width="1.3"/><rect x="254.3" y="552" width="1.6" height="12.5" fill="#888"/><path d="M260,548.5 H270 M257.3,553.5 H270 M257.3,558.5 H270 M257.3,563.5 H270" stroke="#222" stroke-width="1"/></svg>
<div style="position:absolute;left:258px;top:79px;width:220px;height:273px;background:#fff;box-shadow:0 1px 6px rgba(0,0,0,0.28)"></div>
<div style="position:absolute;left:261.5px;top:113.5px;width:213.5px;height:211px;background:linear-gradient(180deg,#deeef9 0%,#e6f3fb 50%,#e2f1fa 100%);border:1.2px solid #2d5876;border-radius:1px"></div>
<div style="position:absolute;left:263px;top:132px;width:210px;height:24px;background:rgba(255,255,255,0.05)"></div><div style="position:absolute;left:263px;top:156px;width:210px;height:24px;background:rgba(255,255,255,0.18)"></div><div style="position:absolute;left:263px;top:180px;width:210px;height:24px;background:rgba(255,255,255,0.05)"></div><div style="position:absolute;left:263px;top:204px;width:210px;height:24px;background:rgba(255,255,255,0.18)"></div><div style="position:absolute;left:263px;top:228px;width:210px;height:24px;background:rgba(255,255,255,0.05)"></div><div style="position:absolute;left:263px;top:252px;width:210px;height:24px;background:rgba(255,255,255,0.18)"></div><div style="position:absolute;left:263px;top:276px;width:210px;height:24px;background:rgba(255,255,255,0.05)"></div><div style="position:absolute;left:263px;top:300px;width:210px;height:24px;background:rgba(255,255,255,0.18)"></div>
<svg style="left:0;top:0" width="500" height="400">
<rect x="258" y="106.5" width="220" height="1" fill="#dcdcdc"/>
<rect x="422" y="79" width="28" height="28" fill="#009119"/>
<path d="M428.5,93 L434.5,98.8 L443.8,88.8" fill="none" stroke="#fff" stroke-width="2.8"/>
<path d="M458.5,89 L469,99.5 M469,89 L458.5,99.5" stroke="#c0303c" stroke-width="2.6"/>
<circle cx="467" cy="341" r="6" fill="#a0a0a0"/>
</svg>
<div class="t" style="left:462.8px;top:336.2px;font-size:9.5px;color:#fff;font-weight:bold">?</div>
<div class="t" style="left:264.5px;top:87px;font-size:14px;color:#333;-webkit-text-stroke:0.45px #333;letter-spacing:-0.35px">Group 1</div>
<div class="t" style="left:267.5px;top:120px;font-size:10px;color:#4a4a4a;letter-spacing:-0.1px">Instances</div>
<div class="t" style="left:268px;top:138.2px;font-size:13px;color:#3b4a55;letter-spacing:0px">Small Plate &lt;1&gt;</div>
<div class="t" style="left:268px;top:162.2px;font-size:13px;color:#3b4a55;letter-spacing:0px">Motor Mount Plate &lt;1&gt;</div>
<div class="t" style="left:268px;top:186.2px;font-size:13px;color:#3b4a55;letter-spacing:0px">Origin Cube &lt;1&gt;</div>
<div class="t" style="left:268px;top:210.2px;font-size:13px;color:#3b4a55;letter-spacing:0px">2.438 in. Rounded Hex Shaft &lt;...</div>
<div class="t" style="left:268px;top:234.2px;font-size:13px;color:#3b4a55;letter-spacing:0px">2.188 in. Rounded Hex Shaft &lt;...</div>
<div class="t" style="left:268px;top:258.2px;font-size:13px;color:#3b4a55;letter-spacing:0px">8 in. Rounded Hex Shaft &lt;1&gt;</div>
<div class="t" style="left:268px;top:282.2px;font-size:13px;color:#3b4a55;letter-spacing:0px">65T HTD Belt &lt;1&gt;</div>
<div class="t" style="left:268px;top:306.2px;font-size:13px;color:#3b4a55;letter-spacing:0px">75T HTD Belt &lt;1&gt;</div>
<svg style="left:0;top:0" width="500" height="400"><path d="M455,142.0 L463,149.8 M463,142.0 L455,149.8" stroke="#444" stroke-width="1.1"/><path d="M455,166.0 L463,173.8 M463,166.0 L455,173.8" stroke="#444" stroke-width="1.1"/><path d="M455,190.0 L463,197.8 M463,190.0 L455,197.8" stroke="#444" stroke-width="1.1"/><path d="M455,214.0 L463,221.8 M463,214.0 L455,221.8" stroke="#444" stroke-width="1.1"/><path d="M455,238.0 L463,245.8 M463,238.0 L455,245.8" stroke="#444" stroke-width="1.1"/><path d="M455,262.0 L463,269.8 M463,262.0 L455,269.8" stroke="#444" stroke-width="1.1"/><path d="M455,286.0 L463,293.8 M463,286.0 L455,293.8" stroke="#444" stroke-width="1.1"/><path d="M455,310.0 L463,317.8 M463,310.0 L455,317.8" stroke="#444" stroke-width="1.1"/></svg>
<svg style="left:0;top:0" width="1919" height="1079">
<rect x="39" y="1049.5" width="35" height="29.5" fill="#d3d3d3"/>
<rect x="74" y="1049.5" width="42" height="27" fill="#e4e4e4"/>
<path d="M108,1050 H238 L245.5,1063.3 L238,1076.6 H108 L115.5,1063.3 Z" fill="#fff"/>
<path d="M238,1050 L245.5,1063.3 L238,1076.6" fill="none" stroke="#cfcfcf" stroke-width="1"/>
<path d="M108,1050 L115.5,1063.3 L108,1076.6" fill="none" stroke="#d8d8d8" stroke-width="1"/>
<path d="M246.5,1049.5 H447.5 V1073 Q447.5,1076.6 444,1076.6 H250 Q246.5,1076.6 246.5,1073 Z" fill="#e8e8e8"/>
<rect x="449.5" y="1049.5" width="199" height="27" fill="#fff"/>
<rect x="450" y="1075" width="198" height="2.5" fill="#1e4f9e"/>
<path d="M650,1049.5 H850.5 V1073 Q850.5,1076.6 847,1076.6 H653.5 Q650,1076.6 650,1073 Z" fill="#e8e8e8"/>
<!-- search icon in strip -->
<path d="M11,1059 H29 V1064 H22 A5,5 0 0 0 17,1068 H11 Z" fill="#333"/>
<circle cx="22" cy="1067" r="4.2" fill="none" stroke="#333" stroke-width="2"/>
<path d="M25,1070 L28.5,1073.5" stroke="#333" stroke-width="2.2"/>
<!-- plus -->
<path d="M49,1064.5 H64 M56.5,1057 V1072" stroke="#555" stroke-width="2.6"/>
<!-- home -->
<path d="M83,1062 L92,1053.5 L97,1058 V1054.5 H100 V1061 L101,1062 V1071 H95 V1065.5 H89 V1071 H83 Z" fill="#5b5b5b"/>
<!-- info -->
<circle cx="266.8" cy="1062.4" r="6.6" fill="#7fa3d3"/>
<rect x="265.8" y="1057.5" width="2" height="2" fill="#fff"/><rect x="265.8" y="1061" width="2" height="5.5" fill="#fff"/>
<!-- asm icons -->
<g transform="translate(278.5,1054)"><path d="M0.5,3 L3,0.5 H16 V15 L13.5,17.5 H0.5 Z" fill="#fff" stroke="#333" stroke-width="1"/><rect x="1.5" y="2.5" width="10" height="10" fill="#8c8c8c"/><path d="M0.5,3 H13.5 V17.5 M13.5,3 L16,0.5" fill="none" stroke="#333" stroke-width="1"/></g>
<g transform="translate(460,1054)"><path d="M0.5,3 L3,0.5 H16 V15 L13.5,17.5 H0.5 Z" fill="#fff" stroke="#333" stroke-width="1"/><rect x="1.5" y="2.5" width="10" height="10" fill="#8c8c8c"/><path d="M0.5,3 H13.5 V17.5 M13.5,3 L16,0.5" fill="none" stroke="#333" stroke-width="1"/></g>
<!-- part studio icon -->
<g fill="#fff" stroke="#333" stroke-width="1"><path d="M663.5,1059 L665.5,1057 H670 V1072 H663.5 Z"/><path d="M668,1057 H672 V1072"/><path d="M670.5,1056 L672.5,1054 H677.5 L679.5,1056 V1072 H670.5 Z"/><path d="M670.5,1056 H677.5 V1072"/></g>
<!-- protractor -->
<path d="M1890.5,1042.5 V1040 A9.8,9.8 0 0 1 1910,1040 V1042.5 Z" fill="none" stroke="#333" stroke-width="1.5"/>
<path d="M1894.5,1040 A5.8,5.8 0 0 1 1906,1040 L1903,1041 A3,3 0 0 0 1897.5,1041 Z" fill="none" stroke="#333" stroke-width="1"/>
</svg>
<div class="t" style="left:131px;top:1056.5px;font-size:14.5px;color:#555;letter-spacing:-0.35px">Exercise 6 - Dir</div>
<div class="t" style="left:300px;top:1057.5px;font-size:14.5px;color:#666;letter-spacing:-0.35px">Exercise 6 Assembly</div>
<div class="t" style="left:482.5px;top:1057.5px;font-size:14.5px;color:#333;letter-spacing:-0.35px">Assembly 2</div>
<div class="t" style="left:684.5px;top:1057.5px;font-size:14.5px;color:#666;letter-spacing:-0.35px">Exercise 6 Part Studio</div>
<svg style="left:0;top:0" width="1919" height="1079"><rect x="1888.5" y="367.5" width="40" height="198" fill="#fff" stroke="#c9c9c9" stroke-width="1"/><rect x="1888.5" y="400.5" width="31" height="1" fill="#d0d0d0"/><rect x="1888.5" y="433.5" width="31" height="1" fill="#d0d0d0"/><rect x="1888.5" y="466.5" width="31" height="1" fill="#d0d0d0"/><rect x="1888.5" y="499.5" width="31" height="1" fill="#d0d0d0"/><rect x="1888.5" y="532.5" width="31" height="1" fill="#d0d0d0"/><rect x="1888.5" y="576.5" width="40" height="165" fill="#fff" stroke="#c9c9c9" stroke-width="1"/><rect x="1888.5" y="609" width="31" height="1" fill="#d0d0d0"/><rect x="1888.5" y="642" width="31" height="1" fill="#d0d0d0"/><rect x="1888.5" y="675" width="31" height="1" fill="#d0d0d0"/><rect x="1888.5" y="708.5" width="31" height="1" fill="#d0d0d0"/>
<rect x="1896.5" y="376.5" width="16" height="15" rx="2.5" fill="none" stroke="#333" stroke-width="1.5"/>
<path d="M1899,380 H1910 M1901,383 H1910 M1901,386 H1910 M1899,389 H1910" stroke="#333" stroke-width="1.2"/>
<g transform="translate(1895,408)"><path d="M3,6 L10,3 L17,6 V13 L10,17 L3,13 Z M3,6 L10,10 L17,6 M10,10 V17" fill="#fff" stroke="#333" stroke-width="1.1"/><rect x="0" y="0" width="8" height="7" fill="#2a5db0"/><path d="M0,2.3 H8 M0,4.6 H8 M2.7,0 V7 M5.3,0 V7" stroke="#fff" stroke-width="0.6"/></g>
<g transform="translate(1896,442)"><rect x="0" y="0" width="4" height="4" fill="#bbb" stroke="#555" stroke-width="0.7"/><path d="M3,5 L6,9 H10" stroke="#2a5db0" stroke-width="1" stroke-dasharray="1.5 1"/><path d="M7,8 h4 v-4 l2,-1 h3 v13 h-9 l-2,-2 z" fill="#fff" stroke="#333" stroke-width="1"/></g>
<g transform="translate(1894,475)"><rect x="9" y="0" width="6" height="10" fill="none" stroke="#333" stroke-width="1" stroke-dasharray="2 1"/><rect x="0.5" y="10" width="17" height="6" fill="#fff" stroke="#333" stroke-width="1"/><circle cx="14.5" cy="13" r="2.2" fill="none" stroke="#333" stroke-width="1"/></g>
<g transform="translate(1904.5,516.5)"><polygon points="0,-9 8,-3 6,7 0,10 -7,6 -8,-3" fill="#8fb4cc"/><polygon points="0,1 -8,-3 -7,6 0,10" fill="#1e5aa8"/><polygon points="0,1 8,-3 6,7 0,10" fill="#9aa6ae"/><polygon points="0,1 0,-9 -8,-3" fill="#b8d8ea"/><path d="M0,1 L0,-9 M0,1 L-8,-3 M0,1 L8,-3 M0,1 L0,10" stroke="#fff" stroke-width="0.8"/></g>
<g transform="translate(1894,541)"><g fill="#333"><rect x="0" y="0" width="9" height="8"/></g><path d="M0,2.6 H9 M0,5.3 H9 M3,0 V8 M6,0 V8" stroke="#fff" stroke-width="0.7"/><path d="M1,8 Q-1,12 1,16 M17,8 Q19,12 17,16" fill="none" stroke="#333" stroke-width="1.5"/><path d="M4,15 Q8,15 9,9 Q10,6 13,7 M6,10 L13,15" fill="none" stroke="#333" stroke-width="1.8"/></g>
<rect x="1895" y="583" width="20" height="19.5" rx="1.5" fill="#1b55c2"/>
<rect x="1893" y="614" width="23" height="24" rx="3" fill="#e0e0e0"/>
<path d="M1904.5,627 C1901,619 1896,617 1896,620 C1896,624 1899,627 1902,628 C1899,629 1898,632 1900,633 C1902,634 1904,631 1904.5,629 C1905,631 1907,634 1909,633 C1911,632 1910,629 1907,628 C1910,627 1913,624 1913,620 C1913,617 1908,619 1904.5,627 Z" fill="#111"/>
<rect x="1893" y="647" width="23" height="24" rx="3" fill="#e0e0e0"/>
<rect x="1896" y="655" width="18" height="12" rx="2" fill="#333" transform="rotate(-10 1905 661)"/>
<circle cx="1901" cy="661" r="2.6" fill="#fff"/><circle cx="1908.5" cy="659.5" r="2.6" fill="#fff"/>
<circle cx="1901" cy="661" r="1.3" fill="#3a7bd5"/><circle cx="1908.5" cy="659.5" r="1.3" fill="#3a7bd5"/>
<path d="M1898,650 h3 M1903,650 h3 M1908,650 h3" stroke="#3a7bd5" stroke-width="1.5"/>
<rect x="1894" y="681" width="21" height="21" rx="1.5" fill="#4caf50"/>
<path d="M1897,685 H1904 V698 H1897 Z M1905,685 H1912 V698 H1905 Z" fill="#fff"/>
<rect x="1894" y="714" width="21" height="21" rx="1.5" fill="#1b55c2"/>
<path d="M1897,718 H1904 V731 H1897 Z M1905,718 H1912 V731 H1905 Z" fill="#fff"/>
</svg>
<div class="t" style="left:1896.5px;top:586px;font-size:15px;color:#fff;font-family:'Liberation Serif',serif;font-weight:bold;letter-spacing:-1.5px;transform:scaleX(0.72);transform-origin:left">MK</div>
<svg style="left:0;top:0" width="1919" height="300">
<polygon points="1830,91.5 1822.5,100.6 1837.5,100.6" fill="#9a9a9a"/>
<polygon points="1830,241 1822.5,231 1837.5,231" fill="#9a9a9a"/>
<polygon points="1755,166 1765,158.5 1765,173.5" fill="#9a9a9a"/>
<polygon points="1905,166 1895.5,158.5 1895.5,173.5" fill="#9a9a9a"/>
<path d="M1809.5,102.5 Q1793,108 1782,118" fill="none" stroke="#9a9a9a" stroke-width="4.5"/>
<polygon points="1776,124.5 1778,111 1789,120" fill="#9a9a9a"/>
<path d="M1850.5,102.5 Q1867,108 1878,118" fill="none" stroke="#9a9a9a" stroke-width="4.5"/>
<polygon points="1884,124.5 1882,111 1871,120" fill="#9a9a9a"/>
<g>
 <polygon points="1817,125 1842,125 1868,140 1869,190 1842,208 1818,208 1792,190 1791,140" fill="#e9ecec"/>
 <polygon points="1806,136 1834,128 1857,142 1831,152" fill="#fafafa" rx="3"/>
 <polygon points="1798,154 1830,160 1828,205 1797,192" fill="#f8f9f9"/>
 <polygon points="1838,160 1864,146 1864,188 1838,203" fill="#f8f9f9"/>
 <circle cx="1839" cy="160" r="5" fill="#fff"/>
 <ellipse cx="1798" cy="148" rx="4" ry="6" fill="#fbfbfb"/>
 <ellipse cx="1838" cy="205" rx="6" ry="3" fill="#fbfbfb"/>
</g>
<path d="M1788.6,148 V197.8 L1839,212.6" fill="none" stroke="none"/>
<line x1="1788.6" y1="147.5" x2="1788.6" y2="198" stroke="#3d3db5" stroke-width="1.3"/>
<line x1="1788.6" y1="198" x2="1839" y2="212.6" stroke="#d03030" stroke-width="1.3"/>
<line x1="1788.6" y1="198" x2="1817" y2="172.5" stroke="#58b058" stroke-width="0.8"/>
<path d="M1820,165 l2,4 l2,-4 M1822,169 v4" fill="none" stroke="#bfe0bf" stroke-width="0.9"/>
<g transform="translate(1875,232)"><polygon points="0,-9 8,-5 8,5 0,9 -8,5 -8,-5" fill="#d8d8d8" stroke="#444" stroke-width="1"/><polygon points="0,-1 8,-5 8,5 0,9" fill="#eeeeee" stroke="#444" stroke-width="0.8"/><polygon points="0,-1 -8,-5 -8,5 0,9" fill="#bdbdbd" stroke="#444" stroke-width="0.8"/><polygon points="0,-9 8,-5 0,-1 -8,-5" fill="#f4f4f4" stroke="#444" stroke-width="0.8"/></g>
<polygon points="1892,230.5 1899,230.5 1895.5,234" fill="#222"/>
</svg>
<div class="t" style="left:1784px;top:131px;font-size:13px;color:#6a6ad0;">Z</div>
<div class="t" style="left:1842px;top:207px;font-size:13px;color:#e03030;">X</div>
<div class="t" style="left:1802px;top:170px;font-size:12px;color:#222;transform:rotate(12deg);transform-origin:left top">Front</div>
<div class="t" style="left:1819px;top:133px;font-size:10px;color:#333;font-style:italic;transform:rotate(22deg);transform-origin:left top">Top</div>
<div class="t" style="left:1849px;top:178px;font-size:9px;color:#333;font-style:italic;transform:rotate(-58deg);transform-origin:left top">Right</div>
<svg style="left:0;top:0" width="1919" height="1079"><path d="M683,506 L1000,595 L996,633 L672,541 Q664,525 670,511 Q675,504 683,506 Z" fill="#e4aa3e" stroke="none" stroke-width="1" /><path d="M683,506 L1000,595 L1000,603 L676,514 Q678,507 683,506 Z" fill="#ecb853" stroke="none" stroke-width="1" /><path d="M673,531 L998,622 L996,633 L672,541 Q670,536 673,531 Z" fill="#d8a13c" stroke="none" stroke-width="1" /><path d="M676,514 L1000,603 M673,531 L998,622" fill="none" stroke="#a77a2a" stroke-width="0.8" /><path d="M683,506 L1000,595 M672,541 L996,633 M683,506 Q664,515 672,541" fill="none" stroke="#f3c466" stroke-width="1" /><polygon points="1323,269 1342,273 1393,287 1429,252 1444,246 1459,247 1471,255 1478,270 1481,287 1480,302 1488,307 1497,314 1500,329 1497,347 1387,515 1369,543 1352,556 1340,554 1320,548 1232,605 1224,615 1188,643 1177,651 1122,684 1091,700 1077,706 1066,706 1060,696 1062,683 1063,673 1067,657 1053,667 1035,680 1015,688 1003,690 992,683 990,673 978,657 975,632 978,607 989,585 1010,563 1039,536 1069,514 1109,477 1140,450 1176,420 1239,360 1314,280" fill="#eab240" /><polygon points="1035,681 1067,657 1060,690" fill="#ffffff" /><path d="M1323,269 L1314,280 L1239,360 L1176,420 L1140,450 L1109,477 L1069,514 L1039,536 L1010,563 L989,585 L1000,592 L1020,572 L1049,545 L1079,522 L1119,486 L1150,459 L1186,429 L1249,369 L1331,283 Z" fill="#e4ab40" stroke="none" stroke-width="1" /><path d="M1331,283 L1249,369 L1186,429 L1150,459 L1119,486 L1079,522 L1049,545 L1020,572 L1000,592" fill="none" stroke="#80601f" stroke-width="0.9" opacity="0.75"/><path d="M989,585 Q972,620 978,657 Q984,678 993,686 L1003,690 Q990,660 992,630 Q994,605 1003,594 Z" fill="#d29b38" stroke="none" stroke-width="1" /><path d="M1067,657 Q1058,685 1062,702 L1072,707 Q1066,690 1074,664 Z" fill="#d29b38" stroke="none" stroke-width="1" /><path d="M1393,287 L1375,306 L1336,346 L1304,379 L1271,410 L1230,450" fill="none" stroke="#80601f" stroke-width="0.8" opacity="0.5"/><path d="M1444,246 L1400,295 L1350,350 L1290,405 L1220,470 L1130,550 L1080,600" fill="none" stroke="#80601f" stroke-width="0.9" opacity="0.6"/><path d="M1440,262 L1404,300" fill="none" stroke="#80601f" stroke-width="0.8" opacity="0.6"/><polygon points="1182,440 1200,431 1202,453 1192,482 1171,482 1147,487 1149,470 1168,468" fill="#d29b38" stroke="#8a6422" stroke-width="0.8" stroke-opacity="0.7"/><polygon points="1207,457 1218,459 1220,467 1211,473 1207,471" fill="#d29b38" stroke="#8a6422" stroke-width="0.8" stroke-opacity="0.7"/><polygon points="1249,453 1269,449 1270,464 1265,482 1247,476" fill="#d29b38" stroke="#8a6422" stroke-width="0.8" stroke-opacity="0.7"/><polygon points="1218,489 1238,491 1239,505 1220,516" fill="#d29b38" stroke="#8a6422" stroke-width="0.8" stroke-opacity="0.7"/><polygon points="1279,478 1289,482 1289,520 1273,529 1256,520 1258,498" fill="#d29b38" stroke="#8a6422" stroke-width="0.8" stroke-opacity="0.7"/><polygon points="1167,500 1180,501 1178,520 1169,518" fill="#d29b38" stroke="#8a6422" stroke-width="0.8" stroke-opacity="0.7"/><polygon points="1305,453 1316,459 1311,487 1305,482" fill="#d29b38" stroke="#8a6422" stroke-width="0.8" stroke-opacity="0.7"/><polygon points="1276,431 1316,422 1316,437 1279,442" fill="#d29b38" stroke="#8a6422" stroke-width="0.8" stroke-opacity="0.7"/><polygon points="1291,339 1318,297 1331,296 1334,305 1328,337 1323,343 1292,345" fill="#d29b38" stroke="#8a6422" stroke-width="0.8" stroke-opacity="0.7"/><polygon points="1317,350 1329,349 1331,355 1322,364" fill="#d29b38" stroke="#8a6422" stroke-width="0.8" stroke-opacity="0.7"/><polygon points="1236,386 1247,382 1247,408 1237,420" fill="#d29b38" stroke="#8a6422" stroke-width="0.8" stroke-opacity="0.7"/><polygon points="1194,430 1201,432 1202,449 1192,447" fill="#d29b38" stroke="#8a6422" stroke-width="0.8" stroke-opacity="0.7"/><polygon points="1149,472 1171,475 1169,486 1149,484" fill="#d29b38" stroke="#8a6422" stroke-width="0.8" stroke-opacity="0.7"/><polygon points="1207,457 1219,460 1215,475 1207,470" fill="#d29b38" stroke="#8a6422" stroke-width="0.8" stroke-opacity="0.7"/><polygon points="1396,318 1414,315 1411,356 1400,352" fill="#d29b38" stroke="#8a6422" stroke-width="0.8" stroke-opacity="0.7"/><polygon points="1399,391 1418,388 1412,432 1402,419" fill="#d29b38" stroke="#8a6422" stroke-width="0.8" stroke-opacity="0.7"/><polygon points="1236,522 1250,527 1249,554 1237,550" fill="#d29b38" stroke="#8a6422" stroke-width="0.8" stroke-opacity="0.7"/><polygon points="1191,549 1199,547 1215,600 1213,609 1200,609 1188,569" fill="#d29b38" stroke="#8a6422" stroke-width="0.8" stroke-opacity="0.7"/><polygon points="1157,593 1177,578 1162,642 1148,645" fill="#d29b38" stroke="#8a6422" stroke-width="0.8" stroke-opacity="0.7"/><polygon points="1129,604 1147,572 1152,576 1147,589 1132,607" fill="#d29b38" stroke="#8a6422" stroke-width="0.8" stroke-opacity="0.7"/><polygon points="1163,582 1177,554 1181,558 1179,569 1166,583" fill="#d29b38" stroke="#8a6422" stroke-width="0.8" stroke-opacity="0.7"/><polygon points="1200,609 1215,600 1218,612 1175,640 1173,624" fill="#d29b38" stroke="#8a6422" stroke-width="0.8" stroke-opacity="0.7"/><polygon points="1380,405 1399,400 1390,442" fill="#d29b38" stroke="#8a6422" stroke-width="0.8" stroke-opacity="0.7"/><polygon points="1399,392 1415,385 1405,427" fill="#d29b38" stroke="#8a6422" stroke-width="0.8" stroke-opacity="0.7"/><path d="M1268,376 L1288,401" fill="none" stroke="#d29b38" stroke-width="7" stroke-linecap="round"/><path d="M1268,376 L1288,401" fill="none" stroke="#80601f" stroke-width="0.7" opacity="0"/><path d="M1062,560 L1072,583" fill="none" stroke="#d29b38" stroke-width="9" stroke-linecap="round"/><path d="M1062,560 L1072,583" fill="none" stroke="#80601f" stroke-width="0.7" opacity="0"/><path d="M1078,555 L1066,584" fill="none" stroke="#d29b38" stroke-width="3" stroke-linecap="round"/><path d="M1078,555 L1066,584" fill="none" stroke="#80601f" stroke-width="0.7" opacity="0"/><path d="M1109,538 L1096,590" fill="none" stroke="#d29b38" stroke-width="8" stroke-linecap="round"/><path d="M1109,538 L1096,590" fill="none" stroke="#80601f" stroke-width="0.7" opacity="0"/><path d="M1125,528 L1134,558" fill="none" stroke="#d29b38" stroke-width="7" stroke-linecap="round"/><path d="M1125,528 L1134,558" fill="none" stroke="#80601f" stroke-width="0.7" opacity="0"/><path d="M1250,560 L1255,578" fill="none" stroke="#d29b38" stroke-width="9" stroke-linecap="round"/><path d="M1250,560 L1255,578" fill="none" stroke="#80601f" stroke-width="0.7" opacity="0"/><path d="M1020,600 L1010,625" fill="none" stroke="#d29b38" stroke-width="8" stroke-linecap="round"/><path d="M1020,600 L1010,625" fill="none" stroke="#80601f" stroke-width="0.7" opacity="0"/><polygon points="1340,298 1375,306 1336,346" fill="#ffffff" stroke="#f3c96c" stroke-width="1"/><polygon points="1292,337 1317,306 1316,331 1310,335" fill="#ffffff" stroke="#f3c96c" stroke-width="1"/><polygon points="1286,364 1295,355 1316,353 1319,364 1294,386 1286,373" fill="#ffffff" stroke="#f3c96c" stroke-width="1"/><polygon points="1265,385 1283,408 1267,408 1264,397" fill="#ffffff" stroke="#f3c96c" stroke-width="1"/><polygon points="1209,408 1233,396 1232,411 1217,439 1209,442 1207,420" fill="#ffffff" stroke="#f3c96c" stroke-width="1"/><polygon points="1169,461 1179,452 1172,466" fill="#ffffff" stroke="#f3c96c" stroke-width="1"/><polygon points="1136,516 1162,506 1166,512 1146,531 1137,527" fill="#ffffff" stroke="#f3c96c" stroke-width="1"/><polygon points="1040,598 1049,604 1043,611" fill="#ffffff" stroke="#f3c96c" stroke-width="1"/><polygon points="1361,352 1397,323 1404,330 1372,362" fill="#ffffff" stroke="#f3c96c" stroke-width="1"/><polygon points="1356,383 1387,370 1359,396" fill="#ffffff" stroke="#f3c96c" stroke-width="1"/><polygon points="1210,551 1234,533 1236,535 1221,578" fill="#ffffff" stroke="#f3c96c" stroke-width="1"/><polygon points="1173,623 1188,569 1199,591 1200,604" fill="#ffffff" stroke="#f3c96c" stroke-width="1"/><polygon points="1138,618 1157,593 1148,645 1138,647" fill="#ffffff" stroke="#f3c96c" stroke-width="1"/><polygon points="1256,531 1280,520 1280,541 1260,539" fill="#ffffff" stroke="#f3c96c" stroke-width="1"/><polygon points="1289,512 1302,515 1295,532" fill="#ffffff" stroke="#f3c96c" stroke-width="1"/><polygon points="1336,505 1360,500 1360,517 1336,535" fill="#ffffff" stroke="#f3c96c" stroke-width="1"/><polygon points="1095,659 1107,643 1101,675" fill="#ffffff" stroke="#f3c96c" stroke-width="1"/><polygon points="1412,427 1414,428 1377,483 1357,500 1356,497 1376,479" fill="#ffffff" stroke="#f3c96c" stroke-width="1"/><polygon points="1355,384 1368,380 1362,390" fill="#ffffff" stroke="#f3c96c" stroke-width="1"/><polygon points="1350,439 1358,437 1350,451" fill="#ffffff" stroke="#f3c96c" stroke-width="1"/><polygon points="1256,526 1261,530 1257,534" fill="#ffffff" stroke="#f3c96c" stroke-width="1"/><polygon points="1451,272 1459,276 1468,289 1469,311 1465,314 1453,316" fill="#d29b38" /><path d="M1453,273 Q1440,280 1430,298 Q1419,320 1419,340 L1421,349 L1455,312 L1455,285 Z" fill="#ffffff" stroke="none" stroke-width="1" /><ellipse cx="1453.5" cy="261.5" rx="3" ry="5" fill="#d29b38" stroke="#80601f" stroke-width="0.7" opacity="0.9"/><ellipse cx="1407.5" cy="303.8" rx="3" ry="5" fill="#d29b38" stroke="#80601f" stroke-width="0.7" opacity="0.9"/><ellipse cx="1269" cy="355" rx="3" ry="5" fill="#d29b38" stroke="#80601f" stroke-width="0.7" opacity="0.9"/><ellipse cx="1338" cy="376" rx="3" ry="5" fill="#d29b38" stroke="#80601f" stroke-width="0.7" opacity="0.9"/><ellipse cx="1195" cy="435" rx="3" ry="5" fill="#d29b38" stroke="#80601f" stroke-width="0.7" opacity="0.9"/><ellipse cx="1137" cy="500" rx="3" ry="5" fill="#d29b38" stroke="#80601f" stroke-width="0.7" opacity="0.9"/><ellipse cx="1217" cy="540" rx="3" ry="5" fill="#d29b38" stroke="#80601f" stroke-width="0.7" opacity="0.9"/><ellipse cx="1111" cy="537" rx="3" ry="5" fill="#d29b38" stroke="#80601f" stroke-width="0.7" opacity="0.9"/><ellipse cx="1242" cy="569" rx="3" ry="5" fill="#d29b38" stroke="#80601f" stroke-width="0.7" opacity="0.9"/><ellipse cx="1318" cy="555" rx="3" ry="5" fill="#d29b38" stroke="#80601f" stroke-width="0.7" opacity="0.9"/><ellipse cx="1003" cy="680" rx="3" ry="4" fill="#d29b38" stroke="#80601f" stroke-width="0.7" opacity="0.9"/><ellipse cx="1082" cy="697" rx="3" ry="4" fill="#d29b38" stroke="#80601f" stroke-width="0.7" opacity="0.9"/><g transform="translate(1040,640) rotate(10)"><ellipse rx="13" ry="25" fill="none" stroke="#cf9836" stroke-width="5"/></g><g transform="translate(1108,652) rotate(10)"><ellipse rx="14" ry="28" fill="none" stroke="#cf9836" stroke-width="5"/></g><polygon points="1093,668 1100,655 1103,676" fill="#ffffff" /><path d="M1480,302 L1488,307 L1497,314 L1500,329 L1497,347 L1387,515 L1369,543 L1352,556 L1340,554 L1320,548 L1316,530 L1336,540 L1360,530 L1378,505 L1484,340 Q1490,322 1480,314 Z" fill="#eab240" stroke="none" stroke-width="1" /><path d="M1490,320 Q1496,333 1493,341 L1372,530 Q1362,545 1345,547" fill="none" stroke="#80601f" stroke-width="0.9" opacity="0.7"/><path d="M1480,302 L1488,307 L1497,314 L1500,329 L1497,347 L1387,515 L1369,543 L1352,556 L1340,554 L1320,548" fill="none" stroke="#f8d57c" stroke-width="1.2" /><path d="M1477,318 Q1491,313 1495,328 L1487,347 L1472,353 Z" fill="#d29b38" stroke="none" stroke-width="1" opacity="0.9"/><path d="M1477,318 Q1491,313 1495,328 L1487,347" fill="none" stroke="#80601f" stroke-width="0.7" opacity="0.6"/><path d="M1471,303 L1421,350 L1355,400 L1315,435" fill="none" stroke="#e8b146" stroke-width="12" /><path d="M1471,297 L1421,344 L1355,394 L1315,429" fill="none" stroke="#f8d57c" stroke-width="1.2" /><path d="M1478,312 L1427,357 L1360,407 L1321,441" fill="none" stroke="#f8d57c" stroke-width="1.2" /><path d="M1476,313 L1426,360 L1360,410 L1322,442" fill="none" stroke="#80601f" stroke-width="0.7" opacity="0.45"/><g transform="translate(1343,492) rotate(14)"><ellipse rx="27" ry="58" fill="none" stroke="#cf9836" stroke-width="9" opacity="0.9"/><ellipse rx="32" ry="63" fill="none" stroke="#f8d57c" stroke-width="1.2"/></g><g transform="translate(1357,490) rotate(14)"><ellipse rx="13" ry="22" fill="#eab240" stroke="#f8d57c" stroke-width="1.2"/><ellipse rx="6" ry="10" fill="none" stroke="#80601f" stroke-width="0.8" opacity="0.6"/></g><g transform="translate(1176,478) rotate(14)"><ellipse rx="27" ry="50" fill="none" stroke="#f8d57c" stroke-width="1.2"/></g><g transform="translate(1250,452) rotate(14)"><ellipse rx="25" ry="36" fill="none" stroke="#f8d57c" stroke-width="1.2"/></g><g transform="translate(1268,510) rotate(14)"><ellipse rx="25" ry="40" fill="none" stroke="#f8d57c" stroke-width="1.2"/></g><g transform="translate(1098,643) rotate(14)"><ellipse rx="30" ry="42" fill="none" stroke="#f8d57c" stroke-width="1.2"/></g><g transform="translate(1003,640) rotate(14)"><ellipse rx="28" ry="46" fill="none" stroke="#f8d57c" stroke-width="1.2"/></g><g transform="translate(1225,560) rotate(14)"><ellipse rx="18" ry="26" fill="none" stroke="#f8d57c" stroke-width="1.2"/></g><polygon points="1182,437 1203,428 1205,453 1194,485 1171,485 1145,490 1147,468 1167,465" fill="none" stroke="#f8d57c" stroke-width="1.3" opacity="0.9"/><polygon points="1247,450 1271,446 1273,464 1267,485 1245,478" fill="none" stroke="#f8d57c" stroke-width="1.3" opacity="0.9"/><polygon points="1278,475 1291,480 1291,521 1273,532 1254,521 1256,497" fill="none" stroke="#f8d57c" stroke-width="1.3" opacity="0.9"/><polygon points="1216,486 1240,488 1241,506 1219,519" fill="none" stroke="#f8d57c" stroke-width="1.3" opacity="0.9"/><path d="M995,628 L1135,665 M1000,608 L1140,645 M1030,660 L1180,560 M1150,600 L1340,470 M1200,520 L1300,455 M1120,505 L1230,440" fill="none" stroke="#f8d57c" stroke-width="1.1" opacity="0.9"/><path d="M1040,615 L1110,635 L1105,660 L1035,640 Z" fill="#d9a33e" stroke="none" stroke-width="1" opacity="0.8"/><path d="M1346,274 L1393,287.5 L1374,307 L1343,299 Z" fill="#1e1e1e" stroke="none" stroke-width="1" /><path d="M1342,274 Q1334,285 1338,297 L1343,299 Q1349,287 1346,274 Z" fill="#121212" stroke="#f8d57c" stroke-width="1" /><path d="M1323,269 L1342,273 L1393,287 L1429,252 L1444,246 L1459,247 L1471,255 L1478,270 L1481,287 L1480,302 L1488,307 L1497,314 L1500,329 L1497,347 L1387,515 L1369,543 L1352,556 L1340,554 L1320,548 L1232,605 L1224,615 L1188,643 L1177,651 L1122,684 L1091,700 L1077,706 L1066,706 L1060,696 L1062,683 L1063,673 L1067,657 L1053,667 L1035,680 L1015,688 L1003,690 L992,683 L990,673 L978,657 L975,632 L978,607 L989,585 L1010,563 L1039,536 L1069,514 L1109,477 L1140,450 L1176,420 L1239,360 L1314,280 Z" fill="none" stroke="#f8d57c" stroke-width="1" opacity="0.75"/><g>
<polygon points="1232,654 1342,686 1342,795 1277,852 1167,821 1167,712" fill="#efc36d"/>
<polygon points="1167,712 1277,740 1342,686 1232,654" fill="#f0c46f"/>
<polygon points="1277,740 1342,686 1342,795 1277,852" fill="#edbf67"/>
<polygon points="1232,654 1342,686 1342,795 1277,852 1167,821 1167,712" fill="none" stroke="#f5d38a" stroke-width="1.2"/>
<polygon points="1232,728 1277,741 1277,777 1232,765" fill="#e6b965"/>
<path d="M1167,712 L1277,740 L1342,686 M1277,740 V852 M1232,654 V765 L1167,821 M1232,765 L1342,795" fill="none" stroke="#8f6a28" stroke-width="1" opacity="0.85"/>
<ellipse cx="1255" cy="698" rx="18" ry="10" fill="none" stroke="#3b4a55" stroke-width="1.5"/>
<ellipse cx="1255" cy="698" rx="16.5" ry="9" fill="#f3f5f6" opacity="0.9"/><path d="M1248,698 Q1250,692 1259,693 Q1266,696 1264,701 Q1260,703 1252,702" fill="none" stroke="#3b4a55" stroke-width="1"/>
<circle cx="1255" cy="698" r="5" fill="#222"/><circle cx="1255" cy="698" r="2" fill="#eee"/>
<path d="M1254,678 V692" stroke="#8fc3e8" stroke-width="2"/>
<path d="M1264,690 L1268,684" stroke="#a8d8a8" stroke-width="1.2"/>
<path d="M1270,703 L1282,705" stroke="#e8a0a0" stroke-width="1.2"/>
</g></svg>
</body></html>
